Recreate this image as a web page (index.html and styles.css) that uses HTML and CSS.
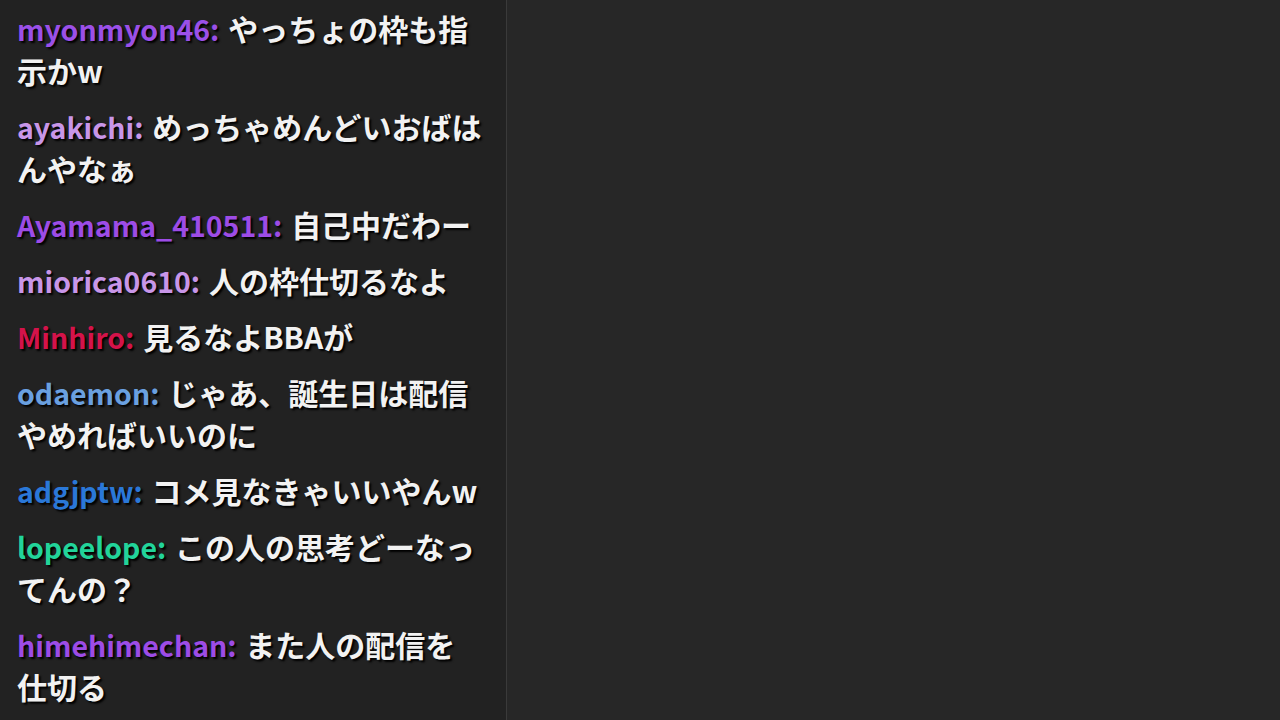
FILE: index.html
```html
<!DOCTYPE html>
<html lang="ja">
<head>
    <meta charset="UTF-8">
    <meta name="viewport" content="width=device-width, initial-scale=1.0">
    <title>チャット</title>
    <link rel="stylesheet" href="styles.css">
</head>
<body>
    <div class="layout">
        <div class="chat">
            <div class="message"><span class="name c-purple">myonmyon46:</span> <span class="text">やっちょの枠も指示かw</span></div>
            <div class="message"><span class="name c-lilac">ayakichi:</span> <span class="text">めっちゃめんどいおばはんやなぁ</span></div>
            <div class="message"><span class="name c-violet">Ayamama_410511:</span> <span class="text">自己中だわー</span></div>
            <div class="message"><span class="name c-lilac">miorica0610:</span> <span class="text">人の枠仕切るなよ</span></div>
            <div class="message"><span class="name c-red">Minhiro:</span> <span class="text">見るなよBBAが</span></div>
            <div class="message"><span class="name c-sky">odaemon:</span> <span class="text">じゃあ、誕生日は配信やめればいいのに</span></div>
            <div class="message"><span class="name c-blue">adgjptw:</span> <span class="text">コメ見なきゃいいやんw</span></div>
            <div class="message"><span class="name c-green">lopeelope:</span> <span class="text">この人の思考どーなってんの？</span></div>
            <div class="message"><span class="name c-violet">himehimechan:</span> <span class="text">また人の配信を仕切る</span></div>
        </div>
        <div class="stage"></div>
    </div>
</body>
</html>
```

FILE: styles.css
```css
body {
    margin: 0;
    background-color: #272727;
    font-family: 'Noto Sans CJK JP', 'Noto Sans', sans-serif;
    overflow: hidden;
}

.layout {
    display: flex;
    height: 100vh;
}

.chat {
    width: 466px;
    flex-shrink: 0;
    padding: 7px 23px 0 17px;
    background-color: #222222;
    border-right: 1px solid #3a3a3a;
    overflow: hidden;
}

.message {
    font-size: 30px;
    font-weight: 700;
    line-height: 42px;
    color: #f2f2f2;
    margin-bottom: 14px;
    word-spacing: 2px;
    text-shadow: 2px 2px 2px #000;
}

.name {
    font-size: 28.5px;
    line-height: 1;
}

.stage {
    flex: 1;
    background-color: #272727;
}

.c-purple { color: #9b50e8; }
.c-lilac  { color: #c896e8; }
.c-violet { color: #9d4ce6; }
.c-red    { color: #d4134a; }
.c-sky    { color: #6aa0e0; }
.c-blue   { color: #2a78d8; }
.c-green  { color: #22d49a; }
```
